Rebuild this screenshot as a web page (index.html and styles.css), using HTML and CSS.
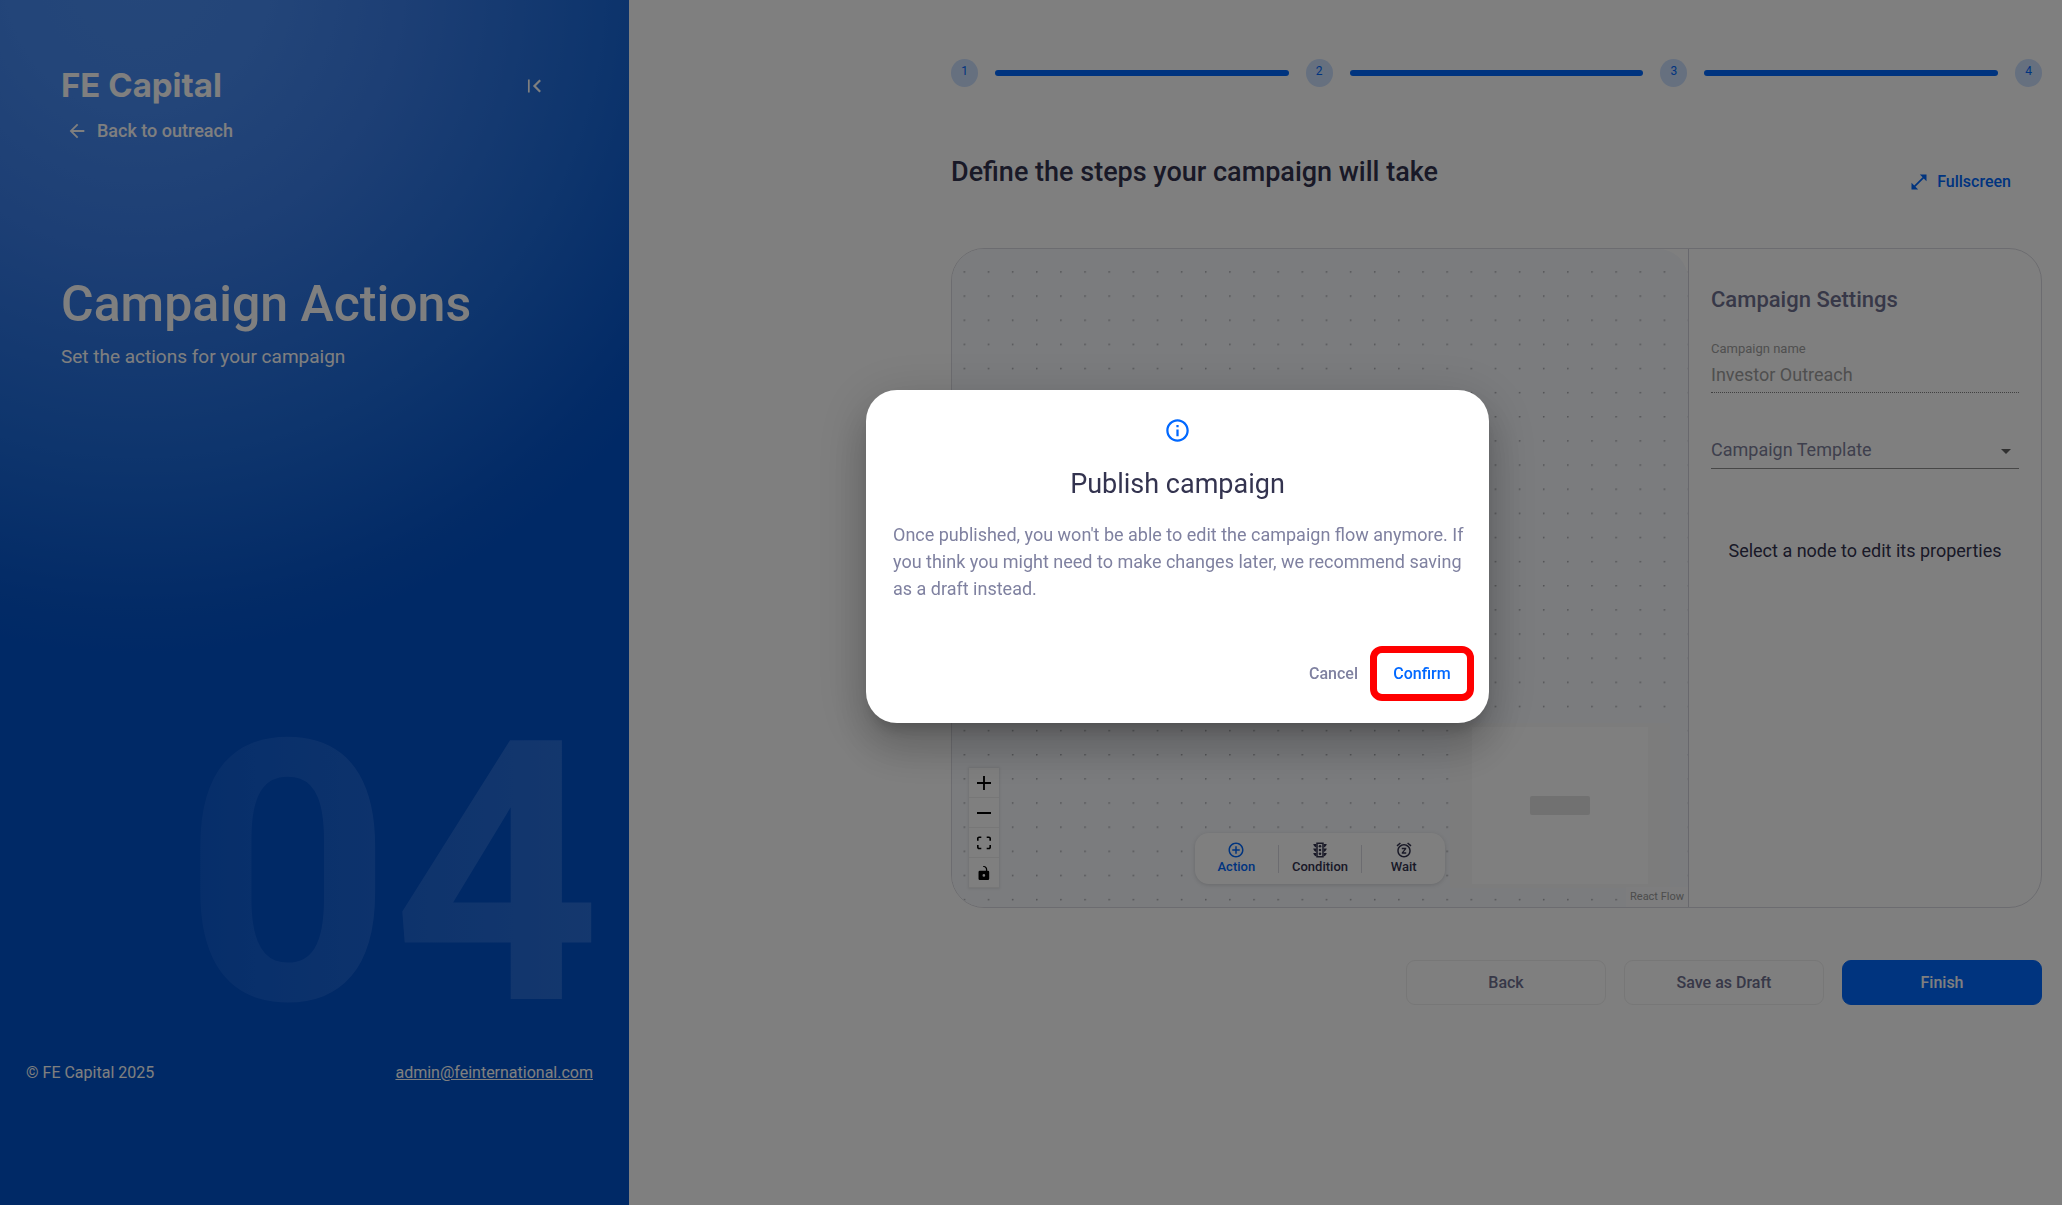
FILE: index.html
```html
<!DOCTYPE html>
<html lang="en">
<head>
  <meta charset="UTF-8">
  <meta name="viewport" content="width=device-width, initial-scale=1.0">
  <title>Campaign Actions</title>
  <link rel="stylesheet" href="styles.css">
</head>
<body>
  <div class="page">
    <!-- Sidebar -->
    <aside class="sidebar">
      <div class="sidebar-top">
        <div class="logo">FE Capital</div>
        <button class="collapse-button" aria-label="Collapse sidebar">
          <svg width="26" height="26" viewBox="0 0 24 24" fill="currentColor"><path d="M17.5 16.59L12.91 12l4.59-4.59L16.09 6l-6 6 6 6zM5.500 6h1.600v12H5.500z"/></svg>
        </button>
      </div>
      <a class="back-link" href="#">
        <svg width="22" height="22" viewBox="0 0 24 24" fill="currentColor"><path d="M20 11H7.83l5.59-5.59L12 4l-8 8 8 8 1.41-1.41L7.83 13H20v-2z"/></svg>
        Back to outreach
      </a>
      <h1>Campaign Actions</h1>
      <p class="subtitle">Set the actions for your campaign</p>
      <div class="step-number">04</div>
      <footer class="sidebar-footer">
        <span>© FE Capital 2025</span>
        <a href="mailto:admin@feinternational.com">admin@feinternational.com</a>
      </footer>
    </aside>

    <!-- Main Section -->
    <main class="main">
      <div class="stepper">
        <span class="step">1</span>
        <span class="step-bar"></span>
        <span class="step">2</span>
        <span class="step-bar"></span>
        <span class="step">3</span>
        <span class="step-bar"></span>
        <span class="step">4</span>
      </div>

      <div class="heading-row">
        <h2>Define the steps your campaign will take</h2>
        <button class="fullscreen-button">
          <svg width="20" height="20" viewBox="0 0 24 24" fill="currentColor"><path d="M21 11V3h-8l3.29 3.29-10 10L3 13v8h8l-3.29-3.29 10-10z"/></svg>
          Fullscreen
        </button>
      </div>

      <div class="editor">
        <div class="flow">
          <svg class="flow-dots" width="100%" height="100%">
            <pattern id="dots" width="24.14" height="24.14" patternUnits="userSpaceOnUse">
              <circle cx="12.4" cy="23" r="0.8" fill="#8f9196"/>
            </pattern>
            <rect width="100%" height="100%" fill="url(#dots)"/>
          </svg>

          <div class="controls">
            <button aria-label="Zoom in"><svg width="14" height="14" viewBox="0 0 32 32"><path d="M32 18.133H18.133V32h-4.266V18.133H0v-4.266h13.867V0h4.266v13.867H32z"/></svg></button>
            <button aria-label="Zoom out"><svg width="14" height="14" viewBox="0 0 32 32"><path d="M0 13.6h32v4.6H0z"/></svg></button>
            <button aria-label="Fit view"><svg width="14" height="14" viewBox="0 0 32 30"><path d="M3.692 4.63c0-.53.4-.938.939-.938h5.215V0H4.708C2.13 0 0 2.054 0 4.63v5.216h3.692V4.631zM27.354 0h-5.2v3.692h5.17c.53 0 .984.4.984.939v5.215H32V4.631A4.624 4.624 0 0027.354 0zm.954 24.83c0 .532-.4.94-.939.94h-5.215v3.768h5.215c2.577 0 4.631-2.13 4.631-4.707v-5.139h-3.692v5.139zm-23.677.94c-.531 0-.939-.4-.939-.94v-5.138H0v5.139c0 2.577 2.13 4.707 4.708 4.707h5.138V25.77H4.631z"/></svg></button>
            <button aria-label="Toggle interactivity"><svg width="14" height="14" viewBox="0 0 25 32"><path d="M21.333 10.667H19.81V7.619C19.81 3.429 16.38 0 12.19 0c-4.114 1.828-1.37 2.133.305 2.438 1.676.305 4.42 2.59 4.42 5.181v3.048H3.047A3.056 3.056 0 000 13.714v15.238A3.056 3.056 0 003.048 32h18.285a3.056 3.056 0 003.048-3.048V13.714a3.056 3.056 0 00-3.048-3.047zM12.19 24.533a3.056 3.056 0 01-3.047-3.047 3.056 3.056 0 013.047-3.048 3.056 3.056 0 013.048 3.048 3.056 3.056 0 01-3.048 3.047z"/></svg></button>
          </div>

          <div class="node-toolbar">
            <button class="node-button active">
              <svg width="18" height="18" viewBox="0 0 24 24" fill="currentColor"><path d="M13 7h-2v4H7v2h4v4h2v-4h4v-2h-4V7zm-1-5C6.48 2 2 6.48 2 12s4.48 10 10 10 10-4.48 10-10S17.52 2 12 2zm0 18c-4.41 0-8-3.59-8-8s3.59-8 8-8 8 3.59 8 8-3.59 8-8 8z"/></svg>
              Action
            </button>
            <button class="node-button">
              <svg width="18" height="18" viewBox="0 0 24 24" fill="currentColor"><path d="M7 2h10v20H7z"/><path d="M3 4h4v4.500C5 8 3.500 6.500 3 4zM3 10h4v4.500C5 14 3.500 12.500 3 10zM3 16h4v4.500C5 20 3.500 18.500 3 16zM21 4h-4v4.500c2-.5 3.500-2 4-4.500zM21 10h-4v4.500c2-.5 3.500-2 4-4.500zM21 16h-4v4.500c2-.5 3.500-2 4-4.500z"/><path d="M9 4h6v16H9z" fill="#fff"/><circle cx="12" cy="7" r="1.700"/><circle cx="12" cy="12" r="1.700"/><circle cx="12" cy="17" r="1.700"/></svg>
              Condition
            </button>
            <button class="node-button">
              <svg width="18" height="18" viewBox="0 0 24 24" fill="currentColor"><path d="M7.88 3.39L6.6 1.86 2 5.71l1.29 1.53 4.59-3.85zM22 5.72l-4.6-3.86-1.29 1.53 4.6 3.86L22 5.72zM12 4c-4.97 0-9 4.03-9 9s4.02 9 9 9c4.97 0 9-4.03 9-9s-4.03-9-9-9zm0 16c-3.87 0-7-3.13-7-7s3.13-7 7-7 7 3.13 7 7-3.13 7-7 7zm-3-9h3.63L9 15.2V17h6v-2h-3.630L15 10.8V9H9v2z"/></svg>
              Wait
            </button>
          </div>

          <div class="minimap">
            <svg width="220" height="165" viewBox="0 0 220 165">
              <rect width="220" height="165" fill="#f8f8f8"/>
              <rect x="22" y="4" width="176" height="157" fill="#fff"/>
              <rect x="80" y="73" width="60" height="19" rx="2" fill="#e2e2e2"/>
            </svg>
          </div>
          <a class="attribution" href="#">React Flow</a>
        </div>

        <form class="settings">
          <h3>Campaign Settings</h3>
          <label class="field-label" for="campaign-name">Campaign name</label>
          <input type="text" id="campaign-name" value="Investor Outreach" disabled>
          <div class="select-wrap">
            <select id="campaign-template" aria-label="Campaign Template">
              <option>Campaign Template</option>
            </select>
            <svg width="10" height="5" viewBox="0 0 10 5"><path d="M0 0h10L5 5z" fill="#606060"/></svg>
          </div>
          <p class="hint">Select a node to edit its properties</p>
        </form>
      </div>

      <div class="actions">
        <button class="button">Back</button>
        <button class="button">Save as Draft</button>
        <button class="button primary">Finish</button>
      </div>
    </main>
  </div>

  <!-- Publish Dialog -->
  <div class="overlay">
    <div class="dialog" role="dialog" aria-labelledby="dialog-title">
      <svg class="dialog-icon" width="27" height="27" viewBox="0 0 24 24" fill="currentColor"><path d="M11 7h2v2h-2zm0 4h2v6h-2zm1-9C6.48 2 2 6.48 2 12s4.48 10 10 10 10-4.48 10-10S17.52 2 12 2zm0 18c-4.41 0-8-3.59-8-8s3.59-8 8-8 8 3.59 8 8-3.59 8-8 8z"/></svg>
      <h2 id="dialog-title">Publish campaign</h2>
      <p>Once published, you won't be able to edit the campaign flow anymore. If you think you might need to make changes later, we recommend saving as a draft instead.</p>
      <div class="dialog-actions">
        <button class="cancel-button">Cancel</button>
        <button class="confirm-button">Confirm</button>
      </div>
    </div>
  </div>
</body>
</html>
```

FILE: styles.css
```css
* {
  box-sizing: border-box;
}

body {
  font-family: Roboto, Arial, sans-serif;
  font-size: 18px;
  background-color: #fff;
  color: #33334f;
  margin: 0;
}

h1, h2, h3, p {
  margin: 0;
}

button {
  font-family: inherit;
  font-size: 16px;
  font-weight: 500;
  color: inherit;
  background: none;
  border: none;
  padding: 0;
  cursor: pointer;
}

svg {
  display: block;
  flex-shrink: 0;
}

.page {
  display: flex;
  min-height: 100vh;
}

/* Sidebar */
.sidebar {
  flex: 0 0 629px;
  display: flex;
  flex-direction: column;
  padding: 64px 36px 120px 26px;
  color: #fff;
  background: radial-gradient(ellipse 106% 57% at 22% -2%, #4a8ef4 0%, #468af2 20%, #3a7eea 40%, #1c6ada 70%, #0656cd 92%, #0052cc 100%);
}

.sidebar-top {
  display: flex;
  justify-content: space-between;
  align-items: center;
  padding: 0 45px 0 35px;
}

.logo {
  font-family: Inter, Arial, sans-serif;
  font-size: 33px;
  font-weight: 700;
  line-height: 43px;
}

.back-link {
  display: flex;
  align-items: center;
  gap: 9px;
  padding-left: 40px;
  margin-top: 13px;
  line-height: 22px;
  font-weight: 500;
  color: #fff;
  text-decoration: none;
}

.sidebar h1 {
  margin: 132px 0 0 35px;
  font-size: 50px;
  font-weight: 500;
  line-height: 60px;
}

.subtitle {
  margin: 12px 0 0 35px;
  font-size: 19px;
  line-height: 22px;
}

.step-number {
  margin: auto -8px 0 0;
  text-align: right;
  font-size: 364px;
  font-weight: 700;
  line-height: 364px;
  background: linear-gradient(90deg, #0052cc 0%, #1260d6 40%, #2a70dc 100%);
  background-clip: text;
  color: transparent;
}

.sidebar-footer {
  display: flex;
  justify-content: space-between;
  margin-top: 4px;
  font-size: 16px;
  line-height: 24px;
}

.sidebar-footer a {
  color: #fff;
}

/* Main Section */
.main {
  flex: 1;
  padding: 59px 20px 0 322px;
}

.stepper {
  display: flex;
  align-items: center;
  gap: 17px;
}

.step {
  width: 27px;
  height: 28px;
  border-radius: 50%;
  background-color: #cce0ff;
  color: #0068ff;
  font-size: 12px;
  line-height: 25px;
  text-align: center;
}

.step-bar {
  flex: 1;
  height: 6px;
  border-radius: 3px;
  background-color: #0068ff;
}

.heading-row {
  display: flex;
  justify-content: space-between;
  align-items: flex-start;
  margin-top: 68px;
}

.heading-row h2 {
  font-size: 27px;
  font-weight: 500;
  line-height: 34px;
}

.fullscreen-button {
  display: flex;
  align-items: center;
  gap: 8px;
  margin: 17px 31px 0 0;
  line-height: 20px;
  color: #0068ff;
}

.editor {
  display: flex;
  height: 660px;
  margin-top: 56px;
  border: 1px solid #d9d9e0;
  border-radius: 33px;
  overflow: hidden;
}

.flow {
  position: relative;
  flex: 1;
  background-color: #f6f8fc;
  border-top-right-radius: 30px;
}

.flow-dots {
  position: absolute;
  inset: 0;
}

.controls {
  position: absolute;
  left: 17px;
  bottom: 19px;
  display: flex;
  flex-direction: column;
  box-shadow: 0 0 2px 1px rgba(0, 0, 0, 0.08);
}

.controls button {
  display: flex;
  align-items: center;
  justify-content: center;
  width: 30px;
  height: 30px;
  background-color: #fefefe;
  border-bottom: 1px solid #eee;
}

.node-toolbar {
  position: absolute;
  left: 243px;
  bottom: 23px;
  display: flex;
  align-items: center;
  width: 250px;
  height: 51px;
  border-radius: 14px;
  background-color: #fff;
  box-shadow: 0 1px 4px rgba(0, 0, 0, 0.15);
}

.node-button {
  flex: 1;
  display: flex;
  flex-direction: column;
  align-items: center;
  height: 28px;
  justify-content: center;
  padding-bottom: 2px;
  font-size: 13px;
  line-height: 15px;
}

.node-button + .node-button {
  border-left: 1px solid #d9d9e0;
}

.node-button.active {
  color: #0068ff;
}

.minimap {
  position: absolute;
  right: 18px;
  bottom: 19px;
}

.attribution {
  position: absolute;
  right: 0;
  bottom: 0;
  padding: 3px 4px;
  font-size: 11px;
  line-height: 14px;
  color: #999;
  background-color: #fafbfd;
  text-decoration: none;
}

.settings {
  flex: 0 0 353px;
  padding: 35px 22px 0;
  border-left: 1px solid #d0d0da;
}

.settings h3 {
  font-size: 22px;
  font-weight: 500;
  line-height: 32px;
  color: #6f7190;
}

.field-label {
  display: block;
  margin-top: 25px;
  font-size: 13px;
  line-height: 16px;
  color: #a0a0a0;
}

.settings input {
  display: block;
  width: 100%;
  height: 36px;
  padding: 0;
  border: none;
  border-bottom: 1px dotted #808080;
  background: none;
  font-family: inherit;
  font-size: 18px;
  color: #9e9e9e;
}

.select-wrap {
  position: relative;
  margin-top: 38px;
}

.settings select {
  appearance: none;
  width: 100%;
  height: 38px;
  padding: 0;
  border: none;
  border-bottom: 1px solid #8f8f8f;
  border-radius: 0;
  background: none;
  font-family: inherit;
  font-size: 18px;
  color: #7d7f9a;
}

.select-wrap svg {
  position: absolute;
  right: 8px;
  top: 18px;
}

.hint {
  margin-top: 70px;
  line-height: 24px;
  text-align: center;
}

.actions {
  display: flex;
  justify-content: flex-end;
  gap: 18px;
  margin-top: 52px;
}

.button {
  width: 200px;
  height: 45px;
  border: 1px solid #eee;
  border-radius: 9px;
  color: #6f7190;
}

.button.primary {
  border-color: #0068ff;
  background-color: #0068ff;
  color: #fff;
}

/* Publish Dialog */
.overlay {
  position: fixed;
  inset: 0;
  display: flex;
  align-items: center;
  justify-content: center;
  padding: 0 0 92px 293px;
  background-color: rgba(0, 0, 0, 0.5);
}

.dialog {
  width: 623px;
  padding: 27px 0 22px;
  border-radius: 31px;
  background-color: #fff;
  box-shadow: 0 12px 16px -7px rgba(0, 0, 0, 0.2), 0 26px 42px 3px rgba(0, 0, 0, 0.14), 0 10px 50px 9px rgba(0, 0, 0, 0.12);
}

.dialog-icon {
  margin: 0 auto;
  color: #0068ff;
}

.dialog h2 {
  margin-top: 22px;
  font-size: 27px;
  font-weight: 400;
  line-height: 36px;
  text-align: center;
}

.dialog p {
  margin-top: 19px;
  padding: 0 16px 0 27px;
  line-height: 27px;
  color: #7f81a0;
}

.dialog-actions {
  display: flex;
  justify-content: flex-end;
  align-items: center;
  gap: 12px;
  margin-top: 44px;
  padding-right: 15px;
}

.cancel-button {
  color: #7f81a0;
}

.confirm-button {
  width: 104px;
  height: 55px;
  border: 7px solid #f00;
  border-radius: 12px;
  color: #0068ff;
}
```
